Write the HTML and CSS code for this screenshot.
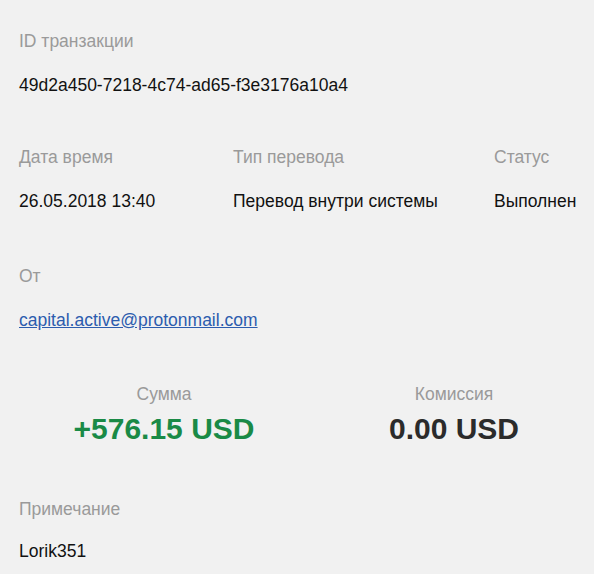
FILE: index.html
```html
<!DOCTYPE html>
<html lang="ru">
<head>
<meta charset="utf-8">
<link rel="stylesheet" href="styles.css">
</head>
<body>
<main class="details">
  <section class="field">
    <div class="label">ID транзакции</div>
    <div class="value">49d2a450-7218-4c74-ad65-f3e3176a10a4</div>
  </section>

  <section class="row row-info">
    <div class="field">
      <div class="label">Дата время</div>
      <div class="value">26.05.2018 13:40</div>
    </div>
    <div class="field">
      <div class="label">Тип перевода</div>
      <div class="value">Перевод внутри системы</div>
    </div>
    <div class="field">
      <div class="label">Статус</div>
      <div class="value">Выполнен</div>
    </div>
  </section>

  <section class="field field-from">
    <div class="label">От</div>
    <div class="value value-link"><a href="#">capital.active@protonmail.com</a></div>
  </section>

  <section class="row row-sums">
    <div class="sum">
      <div class="label">Сумма</div>
      <div class="amount amount-plus">+576.15 USD</div>
    </div>
    <div class="sum">
      <div class="label">Комиссия</div>
      <div class="amount">0.00 USD</div>
    </div>
  </section>

  <section class="field field-note">
    <div class="label">Примечание</div>
    <div class="value">Lorik351</div>
  </section>
</main>
</body>
</html>
```

FILE: styles.css
```css
html, body {
  margin: 0;
  padding: 0;
  background: #f1f1f1;
}

body {
  font-family: "Liberation Sans", Arial, sans-serif;
  color: #111;
  overflow: hidden;
}

.details {
  padding: 31px 19px 0 19px;
  display: flex;
  flex-direction: column;
}

.label {
  font-size: 17.5px;
  line-height: 20px;
  color: #9a9a9a;
}

.value {
  font-size: 17.5px;
  line-height: 24px;
  margin-top: 22px;
  color: #111;
  white-space: nowrap;
}

.row-info {
  margin-top: 50px;
  display: grid;
  grid-template-columns: 214px 261px auto;
}

.field-from {
  margin-top: 53px;
}

.field-from .value {
  margin-top: 22px;
}

.value-link a {
  color: #2c5cae;
  text-decoration: underline;
}

.row-sums {
  margin-top: 52px;
  display: grid;
  grid-template-columns: 290px 272px;
  column-gap: 9px;
  text-align: center;
}

.amount {
  margin-top: 7px;
  font-size: 30px;
  line-height: 36px;
  font-weight: bold;
  color: #2b2b2b;
}

.amount-plus {
  color: #1a8a46;
}

.field-note {
  margin-top: 52px;
}

.field-note .value {
  margin-top: 20px;
}
```
